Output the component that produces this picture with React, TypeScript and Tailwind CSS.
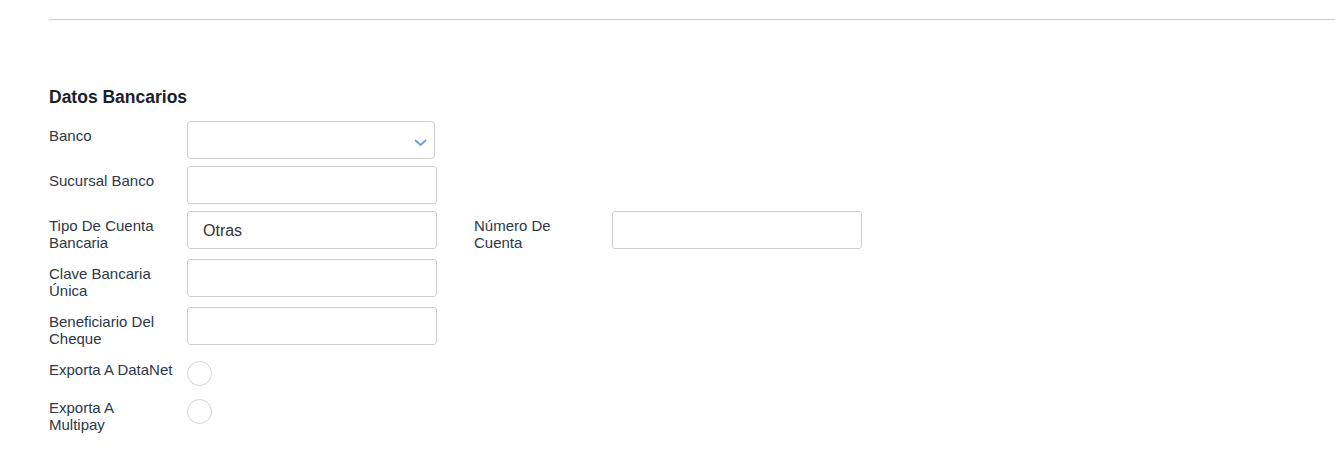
const fields = [
  { label: "Banco", kind: "select" },
  { label: "Sucursal Banco", kind: "text" },
  { label: "Tipo De Cuenta Bancaria", kind: "text", value: "Otras", extra: "Número De Cuenta" },
  { label: "Clave Bancaria Única", kind: "text" },
  { label: "Beneficiario Del Cheque", kind: "text" },
  { label: "Exporta A DataNet", kind: "radio" },
  { label: "Exporta A Multipay", kind: "radio" },
];

const Label = ({ text }: { text: string }) => (
  <div className="w-[138px] shrink-0 pr-[14.5px] pt-[6px] pb-[1px] text-[15px] leading-[17px] text-[#2d3748]">
    {text}
  </div>
);

const TextInput = ({ value }: { value?: string }) => (
  <div className="w-[250px] h-[38px] border border-[#cfcfcf] rounded-[3px] bg-white flex items-center pl-[15px] pt-[1px] text-[16px] text-[#333]">
    {value}
  </div>
);

const Field = ({ field }: { field: (typeof fields)[number] }) => {
  if (field.kind === "select") {
    return (
      <div className="relative w-[248px] h-[38px] border border-[#cfcfcf] rounded-[4px] bg-white">
        <svg
          className="absolute right-[7px] top-[17px]"
          width="13"
          height="8"
          viewBox="0 0 13 8"
          fill="none"
        >
          <path d="M1.5 1.5 6.5 6 11.5 1.5" stroke="#6b9be0" strokeWidth="1.8" strokeLinecap="round" />
        </svg>
      </div>
    );
  }
  if (field.kind === "radio") {
    return <div className="mt-[6px] w-[25px] h-[25px] rounded-full border border-[#d4d4d4] bg-white" />;
  }
  return <TextInput value={field.value} />;
};

export default function App() {
  return (
    <div className="min-h-[450px] bg-white pl-[49px] font-['Liberation_Sans',Arial,sans-serif]">
      <div className="pt-[19px]">
        <div className="h-px bg-[#cccccc]" />
      </div>

      <h2 className="mt-[66px] text-[17.5px] leading-[22px] font-bold text-[#1a202c]">Datos Bancarios</h2>

      <div className="mt-[13px] flex flex-col gap-[7px]">
        {fields.map((field, index) => (
          <div key={index} className="flex items-start">
            <div className="flex items-start w-[425px] shrink-0">
              <Label text={field.label} />
              <Field field={field} />
            </div>
            {field.extra && (
              <div className="flex items-start">
                <Label text={field.extra} />
                <TextInput />
              </div>
            )}
          </div>
        ))}
      </div>
    </div>
  );
}
